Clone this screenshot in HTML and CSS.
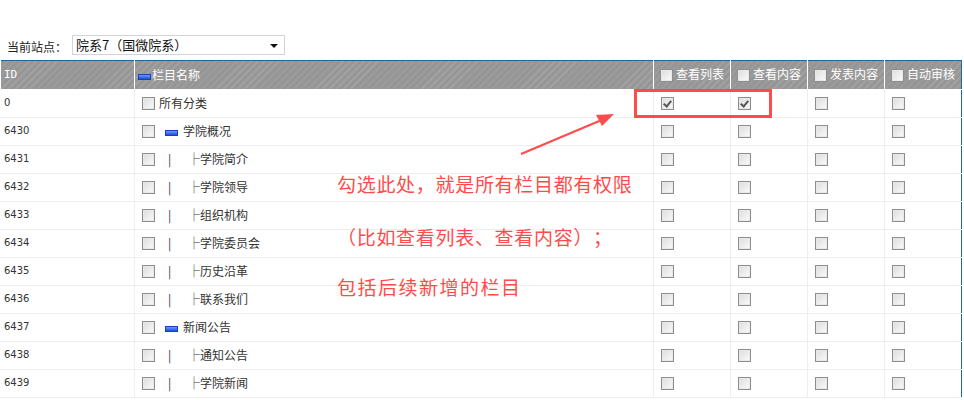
FILE: index.html
```html
<!DOCTYPE html>
<html>
<head>
<meta charset="utf-8">
<link rel="stylesheet" href="styles.css">
</head>
<body>
<div class="page">
  <div class="site-bar">
    <span class="site-label">当前站点：</span>
    <div class="select"><span>院系7（国微院系）</span><span class="caret"></span></div>
  </div>
  <table class="grid">
    <colgroup>
      <col class="c-id"><col class="c-name"><col class="c-perm"><col class="c-perm"><col class="c-perm"><col class="c-perm">
    </colgroup>
    <thead>
      <tr>
        <th class="th-id">ID</th>
        <th><span class="minus hd"></span>栏目名称</th>
        <th><span class="cb"></span>查看列表</th>
        <th><span class="cb"></span>查看内容</th>
        <th><span class="cb"></span>发表内容</th>
        <th><span class="cb"></span>自动审核</th>
      </tr>
    </thead>
    <tbody>
      <tr><td class="id">0</td><td class="name"><span class="cb"></span>所有分类</td><td><span class="cb on"></span></td><td><span class="cb on"></span></td><td><span class="cb"></span></td><td><span class="cb"></span></td></tr>
      <tr><td class="id">6430</td><td class="name"><span class="cb"></span><span class="minus"></span>学院概况</td><td><span class="cb"></span></td><td><span class="cb"></span></td><td><span class="cb"></span></td><td><span class="cb"></span></td></tr>
      <tr><td class="id">6431</td><td class="name"><span class="cb"></span><span class="pipe">|</span><span class="leaf">├学院简介</span></td><td><span class="cb"></span></td><td><span class="cb"></span></td><td><span class="cb"></span></td><td><span class="cb"></span></td></tr>
      <tr><td class="id">6432</td><td class="name"><span class="cb"></span><span class="pipe">|</span><span class="leaf">├学院领导</span></td><td><span class="cb"></span></td><td><span class="cb"></span></td><td><span class="cb"></span></td><td><span class="cb"></span></td></tr>
      <tr><td class="id">6433</td><td class="name"><span class="cb"></span><span class="pipe">|</span><span class="leaf">├组织机构</span></td><td><span class="cb"></span></td><td><span class="cb"></span></td><td><span class="cb"></span></td><td><span class="cb"></span></td></tr>
      <tr><td class="id">6434</td><td class="name"><span class="cb"></span><span class="pipe">|</span><span class="leaf">├学院委员会</span></td><td><span class="cb"></span></td><td><span class="cb"></span></td><td><span class="cb"></span></td><td><span class="cb"></span></td></tr>
      <tr><td class="id">6435</td><td class="name"><span class="cb"></span><span class="pipe">|</span><span class="leaf">├历史沿革</span></td><td><span class="cb"></span></td><td><span class="cb"></span></td><td><span class="cb"></span></td><td><span class="cb"></span></td></tr>
      <tr><td class="id">6436</td><td class="name"><span class="cb"></span><span class="pipe">|</span><span class="leaf">├联系我们</span></td><td><span class="cb"></span></td><td><span class="cb"></span></td><td><span class="cb"></span></td><td><span class="cb"></span></td></tr>
      <tr><td class="id">6437</td><td class="name"><span class="cb"></span><span class="minus"></span>新闻公告</td><td><span class="cb"></span></td><td><span class="cb"></span></td><td><span class="cb"></span></td><td><span class="cb"></span></td></tr>
      <tr><td class="id">6438</td><td class="name"><span class="cb"></span><span class="pipe">|</span><span class="leaf">├通知公告</span></td><td><span class="cb"></span></td><td><span class="cb"></span></td><td><span class="cb"></span></td><td><span class="cb"></span></td></tr>
      <tr><td class="id">6439</td><td class="name"><span class="cb"></span><span class="pipe">|</span><span class="leaf">├学院新闻</span></td><td><span class="cb"></span></td><td><span class="cb"></span></td><td><span class="cb"></span></td><td><span class="cb"></span></td></tr>
    </tbody>
  </table>

  <div class="highlight"></div>
  <svg class="arrow" width="110" height="50" viewBox="0 0 110 50">
    <line x1="5" y1="45" x2="88" y2="10" stroke="#ff4b4b" stroke-width="2"/>
    <polygon points="98,5 80,6 86,17" fill="#ff4b4b"/>
  </svg>
  <div class="note n1">勾选此处，就是所有栏目都有权限</div>
  <div class="note n2">（比如查看列表、查看内容）；</div>
  <div class="note n3">包括后续新增的栏目</div>
</div>
</body>
</html>
```
FILE: styles.css
```css
html, body {
  margin: 0;
  padding: 0;
  background: #fff;
}
.page {
  position: relative;
  width: 964px;
  height: 400px;
  overflow: hidden;
  font-family: "Noto Sans CJK SC", "Noto Sans", sans-serif;
  font-size: 12px;
  line-height: 14px;
  color: #333;
  text-spacing-trim: space-all;
}
.site-bar {
  display: flex;
  align-items: center;
  height: 20px;
  padding: 35px 0 0 7px;
  gap: 5px;
}
.site-label {
  font-size: 12px;
  color: #222;
  margin-top: 4px;
}
.select {
  display: flex;
  align-items: center;
  justify-content: space-between;
  padding: 0 6px 0 3px;
  box-sizing: border-box;
  width: 213px;
  height: 20px;
  border: 1px solid #d4d4d4;
  color: #111;
  font-size: 13px;
}
.caret {
  width: 0;
  height: 0;
  border-left: 4px solid transparent;
  border-right: 4px solid transparent;
  border-top: 4px solid #111;
  margin-top: 2px;
}
.grid {
  margin-top: 5px;
  width: 962px;
  border-collapse: collapse;
  table-layout: fixed;
  border-top: 1px solid #1d69a0;
  border-right: 1px solid #1d69a0;
}
.c-id { width: 134px; }
.c-name { width: 519px; }
.c-perm { width: 77px; }
thead th {
  height: 28px;
  padding: 0 0 0 6px;
  text-align: left;
  font-weight: normal;
  color: #fff;
  font-size: 12px;
  line-height: 14px;
  border-left: 1px solid #fff;
  border-bottom: 1px solid #fff;
  background-color: #999;
  background-image: repeating-linear-gradient(-45deg, #969696 0px, #969696 4px, #a6a6a6 4px, #a6a6a6 5px);
  white-space: nowrap;
}
thead th.th-id {
  padding-left: 3px;
  font-family: "DejaVu Sans Mono", monospace;
  font-size: 11px;
}
thead th:nth-child(2) { padding-left: 3px; }
tbody td {
  height: 28px;
  box-sizing: border-box;
  border-bottom: 1px solid #eee;
  border-left: 1px solid #eee;
  padding: 0 0 0 7px;
  vertical-align: middle;
  white-space: nowrap;
  line-height: 14px;
}
tbody td.id {
  padding: 0 0 1px 3px;
  font-family: "DejaVu Sans", sans-serif;
  font-size: 10px;
  color: #333;
  border-left: 1px solid #fff;
}
tbody td.name { padding-left: 7px; }
.cb {
  display: inline-block;
  width: 11px;
  height: 11px;
  border: 1px solid #8e8e8e;
  background: linear-gradient(135deg, #dcdcdc 0%, #f2f2f2 70%, #fafafa 100%);
  box-shadow: inset 0 0 0 1px #e8e8e8;
  vertical-align: middle;
  margin-right: 2px;
  position: relative;
  top: -1px;
}
thead .cb { margin-right: 3px; top: -1px; }
.cb.on::after {
  content: "";
  position: absolute;
  left: 3px;
  top: 1px;
  width: 3px;
  height: 6px;
  border-right: 2px solid #555;
  border-bottom: 2px solid #555;
  transform: rotate(40deg);
}
td.name .cb { margin-right: 4px; }
.minus {
  display: inline-block;
  width: 11px;
  height: 4px;
  background: linear-gradient(#6b9bff, #1a4fe0);
  border: 1px solid #1740c0;
  vertical-align: middle;
  margin: 0 5px 0 6px;
}
.minus.hd { margin: 0 1px 0 0; }
.pipe {
  display: inline-block;
  width: 10px;
  margin-left: 9px;
  color: #333;
}
.leaf {
  margin-left: 10px;
}
.highlight {
  position: absolute;
  left: 634px;
  top: 89px;
  width: 132px;
  height: 23px;
  border: 3px solid #ff4b4b;
}
.arrow {
  position: absolute;
  left: 516px;
  top: 109px;
}
.note {
  position: absolute;
  left: 337px;
  color: #ff4b4b;
  font-size: 19px;
  line-height: 24px;
  letter-spacing: 0.7px;
  white-space: nowrap;
}
.n1 { top: 172px; }
.n2 { top: 225px; left: 337px; }
.n3 { top: 275px; letter-spacing: 1.5px; }
```
